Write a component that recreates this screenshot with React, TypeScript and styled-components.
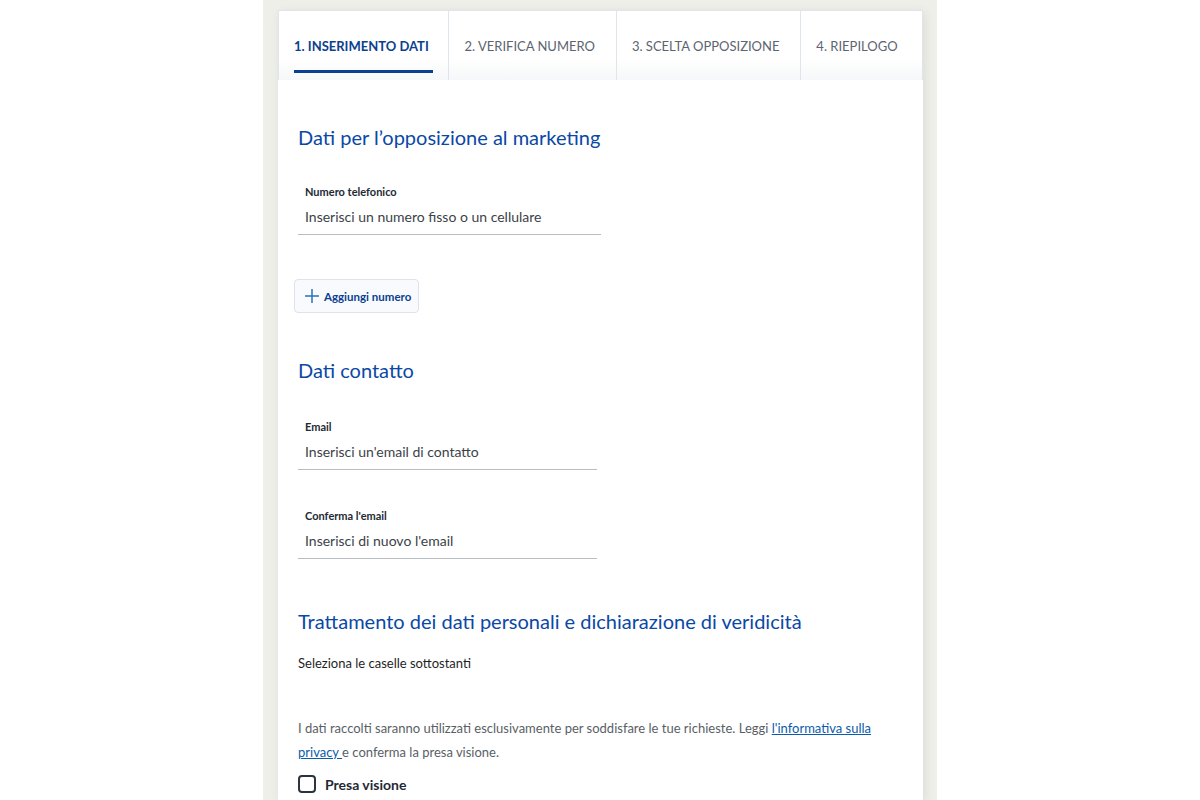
import styled, { createGlobalStyle } from 'styled-components';

const GlobalStyle = createGlobalStyle`
    html, body {
        margin: 0;
        padding: 0;
        background: #ffffff;
    }
    body {
        font-family: Lato, "Open Sans", sans-serif;
        color: #222;
    }
`;

const Page = styled.div`
    display: flex;
    justify-content: center;
    min-height: 800px;
`;

const Column = styled.div`
    width: 674px;
    background: #efefe9;
    padding: 10px 14px 0 15px;
    box-sizing: border-box;
`;

const Wizard = styled.div`
    width: 645px;
    box-shadow: 2px 2px 10px rgba(0, 0, 0, 0.08);
`;

const Tabs = styled.div`
    display: flex;
    height: 70px;
    border: 1px solid #e0e4ec;
    border-bottom: none;
    box-sizing: border-box;
    background: linear-gradient(#ffffff 70%, #f6f7f9);
`;

const Tab = styled.div<{ $active?: boolean; $width: number }>`
    position: relative;
    width: ${({ $width }) => $width}px;
    display: flex;
    align-items: center;
    padding: 0 15px;
    box-sizing: border-box;
    border-right: 1px solid #e0e4ec;
    font-size: 13px;
    font-weight: ${({ $active }) => ($active ? 700 : 400)};
    color: ${({ $active }) => ($active ? '#0b3f8f' : '#5c6470')};
    white-space: nowrap;

    &:last-child {
        border-right: none;
    }

    ${({ $active }) =>
        $active &&
        `
        &::after {
            content: '';
            position: absolute;
            left: 15px;
            right: 15px;
            bottom: 7px;
            height: 3px;
            background: #0b3f8f;
        }
    `}
`;

const Body = styled.div`
    background: #ffffff;
    padding: 42px 20px 0 20px;
    min-height: 720px;
    box-sizing: border-box;
`;

const SectionTitle = styled.h2`
    margin: 0;
    font-size: 20px;
    font-weight: 400;
    line-height: 30px;
    color: #0a48a6;
`;

const Field = styled.div<{ $width: number }>`
    width: ${({ $width }) => $width}px;
    border-bottom: 1px solid #b9bcc0;
    padding: 0 7px 8px;
    box-sizing: border-box;
`;

const FieldLabel = styled.div`
    font-size: 11px;
    font-weight: 700;
    color: #1e2a36;
    line-height: 14px;
    margin-bottom: 9px;
`;

const FieldValue = styled.div`
    font-size: 14px;
    color: #3c4248;
    line-height: 18px;
`;

const AddButton = styled.button`
    display: flex;
    align-items: center;
    gap: 4px;
    height: 34px;
    margin-left: -4px;
    padding: 0 7px 0 9px;
    background: #f8fafd;
    border: 1px solid #dde3ea;
    border-radius: 4px;
    font-family: inherit;
    font-size: 11.5px;
    font-weight: 700;
    color: #0b3f8f;
`;

const Plain = styled.p`
    margin: 0;
    font-size: 13px;
    line-height: 24px;
    color: #1f1f1f;
`;

const Notice = styled.p`
    margin: 0;
    font-size: 13px;
    line-height: 24px;
    color: #5a5f66;

    a {
        color: #0b5cad;
        text-decoration: underline;
    }
`;

const CheckRow = styled.label`
    display: flex;
    align-items: center;
    gap: 9px;
    font-size: 14px;
    font-weight: 700;
    color: #1f2a36;
`;

const Box = styled.span`
    width: 18px;
    height: 18px;
    border: 2px solid #2c3440;
    border-radius: 4px;
    box-sizing: border-box;
`;

const Spacer = styled.div<{ $h: number }>`
    height: ${({ $h }) => $h}px;
`;

const PlusIcon = () => (
    <svg width="16" height="16" viewBox="0 0 16 16" fill="none">
        <path d="M8 1v14M1 8h14" stroke="#2d6fbd" strokeWidth="1.5" />
    </svg>
);

const tabs = [
    { label: '1. INSERIMENTO DATI', width: 171, active: true },
    { label: '2. VERIFICA NUMERO', width: 168 },
    { label: '3. SCELTA OPPOSIZIONE', width: 185 },
    { label: '4. RIEPILOGO', width: 121 },
];

export default function App() {
    return (
        <>
            <GlobalStyle />
            <Page>
                <Column>
                    <Wizard>
                        <Tabs>
                            {tabs.map(t => (
                                <Tab key={t.label} $active={t.active} $width={t.width}>
                                    {t.label}
                                </Tab>
                            ))}
                        </Tabs>
                        <Body>
                            <SectionTitle>Dati per l’opposizione al marketing</SectionTitle>
                            <Spacer $h={33} />
                            <Field $width={303}>
                                <FieldLabel>Numero telefonico</FieldLabel>
                                <FieldValue>Inserisci un numero fisso o un cellulare</FieldValue>
                            </Field>
                            <Spacer $h={44} />
                            <AddButton>
                                <PlusIcon />
                                Aggiungi numero
                            </AddButton>
                            <Spacer $h={42} />
                            <SectionTitle>Dati contatto</SectionTitle>
                            <Spacer $h={35} />
                            <Field $width={299}>
                                <FieldLabel>Email</FieldLabel>
                                <FieldValue>Inserisci un'email di contatto</FieldValue>
                            </Field>
                            <Spacer $h={39} />
                            <Field $width={299}>
                                <FieldLabel>Conferma l'email</FieldLabel>
                                <FieldValue>Inserisci di nuovo l'email</FieldValue>
                            </Field>
                            <Spacer $h={47} />
                            <SectionTitle>Trattamento dei dati personali e dichiarazione di veridicità</SectionTitle>
                            <Spacer $h={15} />
                            <Plain>Seleziona le caselle sottostanti</Plain>
                            <Spacer $h={41} />
                            <Notice>
                                I dati raccolti saranno utilizzati esclusivamente per soddisfare le tue
                                richieste. Leggi <a href="#">l'informativa sulla privacy </a>e conferma la
                                presa visione.
                            </Notice>
                            <Spacer $h={11} />
                            <CheckRow>
                                <Box />
                                Presa visione
                            </CheckRow>
                        </Body>
                    </Wizard>
                </Column>
            </Page>
        </>
    );
}
